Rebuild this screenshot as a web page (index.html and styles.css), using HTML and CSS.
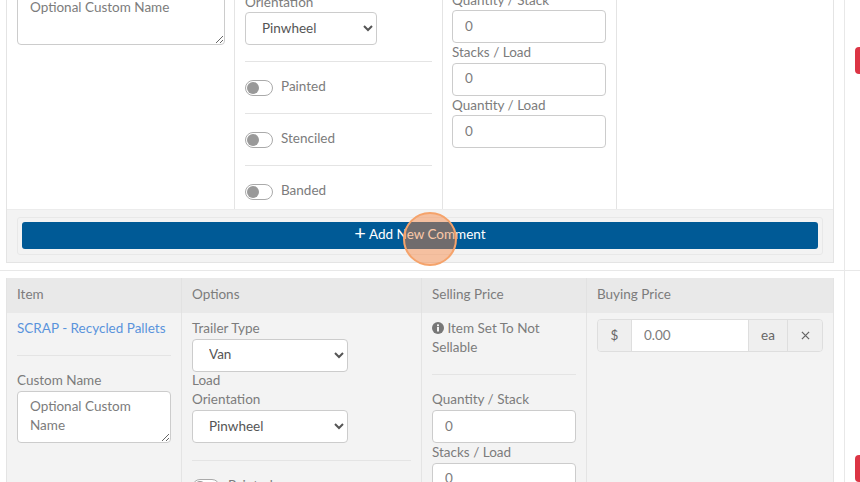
FILE: index.html
```html
<!DOCTYPE html>
<html lang="en">
<head>
<meta charset="utf-8">
<title>Items</title>
<link rel="stylesheet" href="styles.css">
</head>
<body>
<div class="page">
  <section class="block block-top">
    <div class="card">
      <div class="cols cols-top">
        <div class="col col-a">
          <textarea class="field area area-top" placeholder="Optional Custom Name"></textarea>
        </div>
        <div class="col col-b">
          <label class="lbl">Orientation</label>
          <select class="field sel sel-top"><option>Pinwheel</option></select>
          <hr class="rule rule-first">
          <div class="check"><span class="toggle"><i></i></span><span class="check-text">Painted</span></div>
          <hr class="rule">
          <div class="check"><span class="toggle"><i></i></span><span class="check-text">Stenciled</span></div>
          <hr class="rule">
          <div class="check"><span class="toggle"><i></i></span><span class="check-text">Banded</span></div>
        </div>
        <div class="col col-c">
          <label class="lbl">Quantity / Stack</label>
          <input class="field num" value="0">
          <label class="lbl">Stacks / Load</label>
          <input class="field num" value="0">
          <label class="lbl">Quantity / Load</label>
          <input class="field num" value="0">
        </div>
        <div class="col col-d"></div>
      </div>
      <div class="foot">
        <div class="foot-box">
          <button class="add"><span class="plus">+</span> Add New Comment</button>
        </div>
      </div>
    </div>
  </section>
  <section class="block block-bottom">
    <div class="card card-alt">
      <div class="cols cols-head">
        <div class="th">Item</div>
        <div class="th">Options</div>
        <div class="th">Selling Price</div>
        <div class="th">Buying Price</div>
      </div>
      <div class="cols cols-body">
        <div class="col">
          <a class="link" href="#">SCRAP - Recycled Pallets</a>
          <hr class="rule rule-item">
          <label class="lbl">Custom Name</label>
          <textarea class="field area area-bottom" placeholder="Optional Custom Name"></textarea>
        </div>
        <div class="col">
          <label class="lbl">Trailer Type</label>
          <select class="field sel sel-bottom sel-van"><option>Van</option></select>
          <label class="lbl lbl-narrow">Load Orientation</label>
          <select class="field sel sel-bottom"><option>Pinwheel</option></select>
          <hr class="rule rule-first">
          <div class="check"><span class="toggle"><i></i></span><span class="check-text">Painted</span></div>
        </div>
        <div class="col">
          <p class="note"><svg class="info" viewBox="0 0 12 12" aria-hidden="true"><circle cx="6" cy="6" r="6" fill="#777"/><rect x="5" y="5" width="2" height="4.5" fill="#f3f3f3"/><rect x="5" y="2.4" width="2" height="1.8" fill="#f3f3f3"/></svg> Item Set To Not Sellable</p>
          <hr class="rule rule-note">
          <label class="lbl">Quantity / Stack</label>
          <input class="field num" value="0">
          <label class="lbl">Stacks / Load</label>
          <input class="field num" value="0">
        </div>
        <div class="col">
          <div class="group">
            <span class="addon addon-cur">$</span>
            <input class="group-input" value="0.00">
            <span class="addon addon-unit">ea</span>
            <span class="addon addon-x"><svg class="x-icon" viewBox="0 0 10 10" aria-hidden="true"><path d="M1 1 9 9M9 1 1 9" stroke="#666" stroke-width="1.4" fill="none"/></svg></span>
          </div>
        </div>
      </div>
    </div>
  </section>
  <span class="ripple"></span>
  <span class="tab tab-a"></span>
  <span class="tab tab-b"></span>
</div>
</body>
</html>
```

FILE: styles.css
```css
* { box-sizing: border-box; }
html, body { margin: 0; height: 100%; }
body {
  background: #fff;
  color: #7c7c7c;
  font-family: "Lato", "Liberation Sans", sans-serif;
  font-size: 13.5px;
  line-height: 19px;
  overflow: hidden;
}
.page {
  position: relative;
  width: 860px;
  height: 482px;
  overflow: hidden;
}
.block {
  width: 845px;
  padding: 0 10px 0 6px;
  border-right: 1px solid #e8e8e8;
}
.block-top {
  height: 271px;
  border-bottom: 1px solid #e8e8e8;
  width: 860px;
  padding-right: 26px;
  border-right: 0;
  position: relative;
}
.block-top::after {
  content: "";
  position: absolute;
  top: 0;
  bottom: 0;
  left: 844px;
  width: 1px;
  background: #e8e8e8;
}
.block-bottom { height: 211px; padding-top: 7px; }
.card {
  border: solid #e4e4e4;
  border-width: 0 1px 1px;
  background: #fff;
}
.card-alt { background: #f3f3f3; min-height: 204px; }
.cols { display: grid; }
.cols-top { grid-template-columns: 228px 208px 174px 1fr; height: 209px; }
.cols-head, .cols-body { grid-template-columns: 175px 240px 165px 1fr; }
.cols-head { background: #e9e9e9; height: 35px; }
.th {
  padding: 7px 10px;
  border-right: 1px solid #e2e2e2;
}
.th:last-child { border-right: 0; }
.col {
  border-right: 1px solid #e4e4e4;
  padding: 6px 10px;
  min-width: 0;
}
.col:last-child { border-right: 0; }
.cols-top .col { padding-top: 0; height: 209px; overflow: hidden; }
.cols-body .col { height: 170px; overflow: hidden; }
.lbl { display: block; line-height: 18px; margin-bottom: 1.5px; }
.lbl-narrow { width: 80px; line-height: 19px; margin: -1px 0 1px; }
.field {
  display: block;
  background: #fff;
  border: 1px solid #ccc;
  border-radius: 4px;
  color: #7c7c7c;
  font: inherit;
  padding: 6px 12px;
  outline: 0;
}
.field::placeholder { color: #7c7c7c; opacity: 1; }
.area { line-height: 19px; }
.area-top { width: 208px; height: 54px; margin-top: -9px; padding-top: 6px; }
.area-bottom { width: 154px; height: 52px; padding-top: 5px; }
.sel { height: 33px; color: #555; padding: 0 12px; }
.sel-top { width: 132px; padding-bottom: 2px; }
.sel-bottom { width: 156px; }
.sel-van { padding-bottom: 2px; }
.cols-top .col-b .lbl { margin-top: -7.5px; }
.col-c { padding-left: 9px; }
.cols-top .col-c .lbl:first-child { margin-top: -9.5px; }
.num { width: 154px; height: 33px; padding-bottom: 8px; }
.cols-body .num { width: 144px; }
.rule {
  border: 0;
  border-top: 1px solid #e4e4e4;
  margin: 0;
}
.rule-first { margin: 16px 0 0; }
.cols-body .rule-first { margin-top: 17.5px; }
.rule-item, .rule-note { margin: 17px 0 14.5px; }
.rule-item + .lbl, .rule-note + .lbl { margin-bottom: 2.5px; }
.check {
  display: flex;
  align-items: center;
  gap: 8px;
  height: 51px;
}
.check-text { padding-bottom: 3px; }
.toggle {
  display: block;
  position: relative;
  width: 28px;
  height: 16px;
  border: 1px solid #aaa;
  border-radius: 8px;
  background: #fff;
}
.toggle i {
  position: absolute;
  left: 1px;
  top: 1px;
  width: 12px;
  height: 12px;
  border-radius: 50%;
  background: #999;
}
.foot {
  height: 53px;
  background: #f3f3f3;
  border-top: 1px solid #ececec;
  padding: 7px 10px 0;
}
.foot-box {
  height: 38px;
  border: 1px solid #e8e8e8;
  border-radius: 3px;
  padding: 4px;
}
.add {
  display: block;
  width: 100%;
  height: 27px;
  border: 0;
  border-radius: 3px;
  background: #005a96;
  color: #fff;
  font: inherit;
  padding: 0 0 3px;
}
.plus { font-size: 20px; line-height: 0; vertical-align: -1px; }
.link { color: #5a94dc; text-decoration: none; display: block; }
.note { margin: 0; }
.info { width: 12px; height: 12px; vertical-align: -1px; }
.group {
  display: flex;
  height: 33px;
  border: 1px solid #dedede;
  border-radius: 4px;
  overflow: hidden;
}
.addon {
  display: flex;
  align-items: center;
  justify-content: center;
  background: #efefef;
  color: #666;
}
.addon-cur { width: 34px; border-right: 1px solid #dedede; }
.addon-unit { width: 39px; border-left: 1px solid #dedede; }
.addon-x { width: 35px; border-left: 1px solid #dedede; }
.x-icon { width: 9px; height: 9px; }
.group-input {
  flex: 1;
  min-width: 0;
  border: 0;
  outline: 0;
  background: #fff;
  color: #7c7c7c;
  font: inherit;
  padding: 0 12px;
}
.ripple {
  position: absolute;
  left: 403px;
  top: 212px;
  width: 54px;
  height: 54px;
  border-radius: 50%;
  border: 2px solid #f5a36b;
  background: rgba(248, 130, 60, .45);
}
.tab {
  position: absolute;
  left: 855px;
  width: 5px;
  height: 27px;
  background: #dc3545;
  border-radius: 4px 0 0 4px;
}
.tab-a { top: 47px; }
.tab-b { top: 455px; }
```
